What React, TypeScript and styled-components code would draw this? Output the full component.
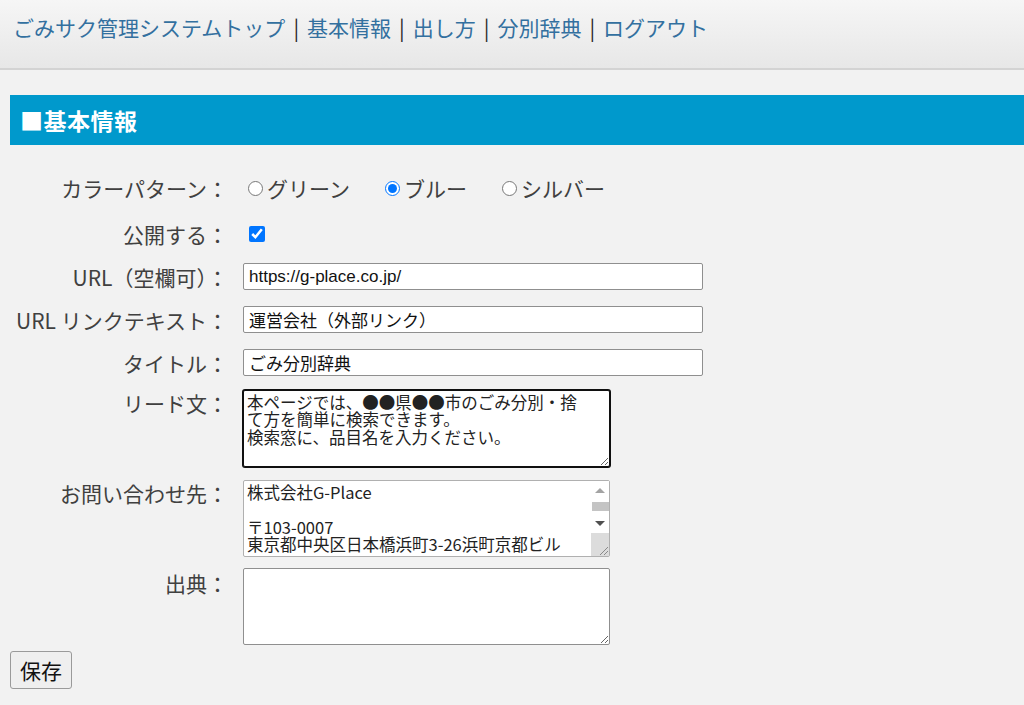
import React from "react";
import styled, { createGlobalStyle } from "styled-components";

const Global = createGlobalStyle`
  html, body { margin: 0; padding: 0; }
  body {
    background: #f2f2f2;
    font-family: "Noto Sans CJK JP", "Noto Sans", sans-serif;
    color: #3a3a3a;
  }
`;

const Header = styled.header`
  height: 70px;
  box-sizing: border-box;
  padding: 14px 13px 0;
  background: linear-gradient(#f6f6f6, #e7e7e7);
  border-bottom: 2px solid #d3d3d3;
`;

const Nav = styled.nav`
  display: flex;
  align-items: center;
  font-size: 21px;
  line-height: 26px;
  white-space: nowrap;
`;

const NavLink = styled.a`
  color: #33709f;
  text-decoration: none;
`;

const Sep = styled.span`
  color: #2b2b2b;
  margin: 0 8px;
`;

const Main = styled.main`
  padding: 25px 0 0 10px;
`;

const Banner = styled.h2`
  margin: 0;
  height: 50px;
  display: flex;
  align-items: center;
  padding-left: 10px;
  background: #0099cc;
  color: #fff;
  font-size: 23px;
  font-weight: 700;
  letter-spacing: 0.5px;
`;

const Form = styled.form`
  display: flex;
  flex-direction: column;
`;

const Row = styled.div<{ $mt: number; $align?: string }>`
  display: grid;
  grid-template-columns: 218px auto;
  column-gap: 15px;
  align-items: ${(p) => p.$align || "center"};
  margin-top: ${(p) => p.$mt}px;
`;

const Label = styled.label<{ $pt?: number }>`
  text-align: right;
  font-size: 21px;
  line-height: 26px;
  color: #404040;
  white-space: nowrap;
  padding-top: ${(p) => p.$pt || 0}px;
`;

const Options = styled.div`
  display: flex;
  align-items: center;
  font-size: 21px;
  line-height: 26px;
  color: #404040;
`;

const Option = styled.label`
  display: flex;
  align-items: center;
  margin-right: 30px;
`;

const Radio = styled.input`
  width: 15px;
  height: 15px;
  margin: 0 4px 0 5px;
  accent-color: #0075ff;
`;

const Check = styled.input`
  width: 16px;
  height: 16px;
  margin: 0 0 0 6px;
  accent-color: #0075ff;
`;

const TextInput = styled.input`
  box-sizing: border-box;
  width: 460px;
  height: 27px;
  padding: 0 5px;
  border: 1px solid #8f8f8f;
  border-radius: 2px;
  background: #fff;
  font-family: "Liberation Sans", "Noto Sans CJK JP", sans-serif;
  font-size: 17px;
  color: #111;
`;

const TextArea = styled.textarea<{ $focused?: boolean; $border?: string; $scroll?: boolean }>`
  display: block;
  box-sizing: border-box;
  width: 367px;
  height: 77px;
  padding: 3px ${(p) => (p.$scroll ? 21 : 3)}px 3px 3px;
  border: 1px solid ${(p) => p.$border || "#8f8f8f"};
  border-radius: 2px;
  background: #fff;
  font-family: "Noto Sans CJK JP", sans-serif;
  font-size: 16.5px;
  line-height: 17.3px;
  color: #222;
  resize: both;
  overflow: hidden;
  outline: none;
  box-shadow: ${(p) => (p.$focused ? "0 0 0 1px #101010" : "none")};
  ${(p) => (p.$focused ? "border-color: #101010;" : "")}
`;

const AreaWrap = styled.div`
  position: relative;
  width: 367px;
`;

const ScrollBar = styled.div`
  position: absolute;
  top: 1px;
  right: 1px;
  bottom: 1px;
  width: 18px;
  display: flex;
  flex-direction: column;
  align-items: center;
  background: #fff;
  pointer-events: none;
`;

const ArrowBtn = styled.div<{ $down?: boolean; $color: string }>`
  width: 18px;
  height: 18px;
  display: flex;
  align-items: center;
  justify-content: center;
  &::before {
    content: "";
    border-left: 5px solid transparent;
    border-right: 5px solid transparent;
    ${(p) =>
      p.$down
        ? `border-top: 5px solid ${p.$color};`
        : `border-bottom: 5px solid ${p.$color};`}
  }
`;

const Thumb = styled.div`
  width: 17px;
  height: 9px;
  margin: 3px 0 3px;
  background: #c4c4c4;
`;

const Corner = styled.div`
  margin-top: auto;
  width: 18px;
  height: 23px;
  background: #dcdcdc;
  display: flex;
  align-items: flex-end;
  justify-content: flex-end;
`;

const SaveButton = styled.button`
  align-self: flex-start;
  margin-top: 6px;
  width: 62px;
  height: 38px;
  padding: 0;
  background: #efefef;
  border: 1px solid #9a9a9a;
  border-radius: 3px;
  font-family: "Noto Sans CJK JP", sans-serif;
  font-size: 21px;
  color: #111;
`;

const lead =
  "本ページでは、●●県●●市のごみ分別・捨\nて方を簡単に検索できます。\n検索窓に、品目名を入力ください。";
const contact =
  "株式会社G-Place\n\n〒103-0007\n東京都中央区日本橋浜町3-26浜町京都ビル\n8F";

export default function App() {
  const links = ["ごみサク管理システムトップ", "基本情報", "出し方", "分別辞典", "ログアウト"];
  return (
    <>
      <Global />
      <Header>
        <Nav>
          {links.map((l, i) => (
            <React.Fragment key={l}>
              {i > 0 && <Sep>|</Sep>}
              <NavLink href="#">{l}</NavLink>
            </React.Fragment>
          ))}
        </Nav>
      </Header>
      <Main>
        <Banner>■基本情報</Banner>
        <Form onSubmit={(e) => e.preventDefault()}>
          <Row $mt={30}>
            <Label>カラーパターン：</Label>
            <Options>
              <Option>
                <Radio type="radio" name="color" />
                グリーン
              </Option>
              <Option>
                <Radio type="radio" name="color" defaultChecked />
                ブルー
              </Option>
              <Option>
                <Radio type="radio" name="color" />
                シルバー
              </Option>
            </Options>
          </Row>
          <Row $mt={20}>
            <Label>公開する：</Label>
            <Options>
              <Check type="checkbox" defaultChecked />
            </Options>
          </Row>
          <Row $mt={16}>
            <Label>URL（空欄可）：</Label>
            <TextInput type="text" defaultValue="https://g-place.co.jp/" />
          </Row>
          <Row $mt={16}>
            <Label>URL リンクテキスト：</Label>
            <TextInput type="text" defaultValue="運営会社（外部リンク）" />
          </Row>
          <Row $mt={16}>
            <Label>タイトル：</Label>
            <TextInput type="text" defaultValue="ごみ分別辞典" />
          </Row>
          <Row $mt={14} $align="start">
            <Label>リード文：</Label>
            <TextArea $focused defaultValue={lead} />
          </Row>
          <Row $mt={13} $align="start">
            <Label>お問い合わせ先：</Label>
            <AreaWrap>
              <TextArea $scroll $border="#b0b0b0" defaultValue={contact} />
              <ScrollBar aria-hidden="true">
                <ArrowBtn $color="#a3a3a3" />
                <Thumb />
                <ArrowBtn $down $color="#505050" />
                <Corner>
                  <svg width="12" height="12" viewBox="0 0 12 12">
                    <path d="M11 3 L3 11 M11 7 L7 11" stroke="#8a8a8a" strokeWidth="1" fill="none" />
                  </svg>
                </Corner>
              </ScrollBar>
            </AreaWrap>
          </Row>
          <Row $mt={11} $align="start">
            <Label $pt={2}>出典：</Label>
            <TextArea defaultValue="" />
          </Row>
          <SaveButton type="submit">保存</SaveButton>
        </Form>
      </Main>
    </>
  );
}
